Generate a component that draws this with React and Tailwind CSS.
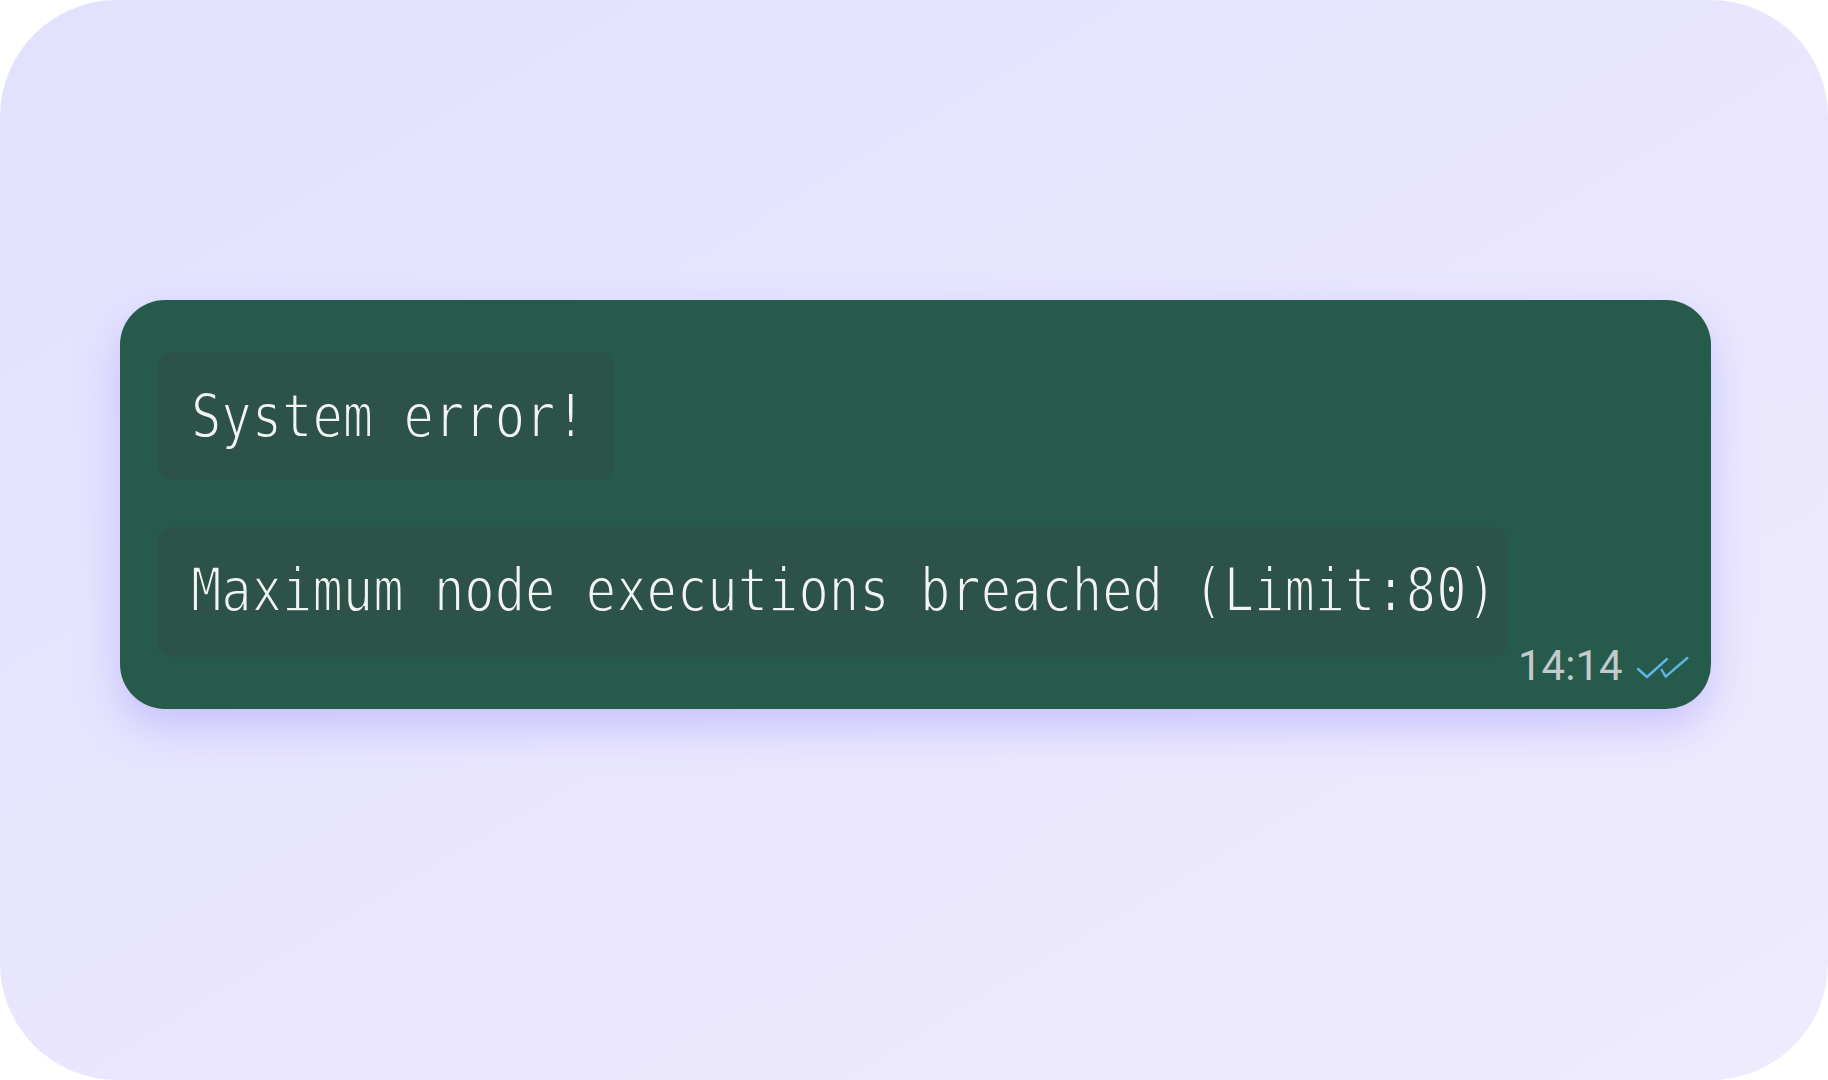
export default function App() {
  const mono = {
    fontFamily: '"DejaVu Sans Mono", "Liberation Mono", monospace',
  };
  return (
    <div className="w-[1828px] h-[1080px] bg-white">
      <div className="w-full h-full rounded-[117px] bg-gradient-to-br from-[#e2e1fe] to-[#efebfe] pt-[300px] pl-[120px] pr-[117px]">
        <div className="w-full rounded-[45px] bg-[#265b4c] pt-[52px] pb-[22px] pl-[38px] pr-[22px] shadow-[0_18px_40px_rgba(140,128,250,0.35)]">
          <div className="flex flex-col gap-[47px]">
            <div
              className="w-[456px] rounded-[15px] bg-[#2d5249] pl-[33px] pt-[33px] pb-[34px] text-[61px] leading-[61px] text-[#f2f4f1] whitespace-nowrap [-webkit-text-stroke:1.8px_#2d5249]"
              style={mono}
            >
              <span className="inline-block origin-left scale-x-[0.827]">System error!</span>
            </div>
            <div className="flex items-end">
              <div
                className="w-[1349px] shrink-0 mb-[30px] rounded-[15px] bg-[#2d5249] pl-[33px] pt-[32px] pb-[37px] text-[61px] leading-[61px] text-[#f2f4f1] whitespace-nowrap [-webkit-text-stroke:1.8px_#2d5249]"
                style={mono}
              >
                <span className="inline-block origin-left scale-x-[0.827]">
                  Maximum node executions breached (Limit:80)
                </span>
              </div>
              <div className="ml-[11px] flex items-end gap-[13px]">
                <span
                  className="text-[42px] leading-none text-[#c4c9cb]"
                  style={{ fontFamily: 'Roboto, "Liberation Sans", sans-serif' }}
                >
                  14:14
                </span>
                <svg
                  width="54"
                  height="24"
                  viewBox="0 0 54 24"
                  fill="none"
                  stroke="#5db7e6"
                  strokeWidth="2.4"
                  strokeLinecap="round"
                  strokeLinejoin="round"
                  className="mb-[7px]"
                >
                  <path d="M2 13 L11 21 L31 3" />
                  <path d="M25.7 14 L29.7 20.7 L51.3 2" />
                </svg>
              </div>
            </div>
          </div>
        </div>
      </div>
    </div>
  );
}
